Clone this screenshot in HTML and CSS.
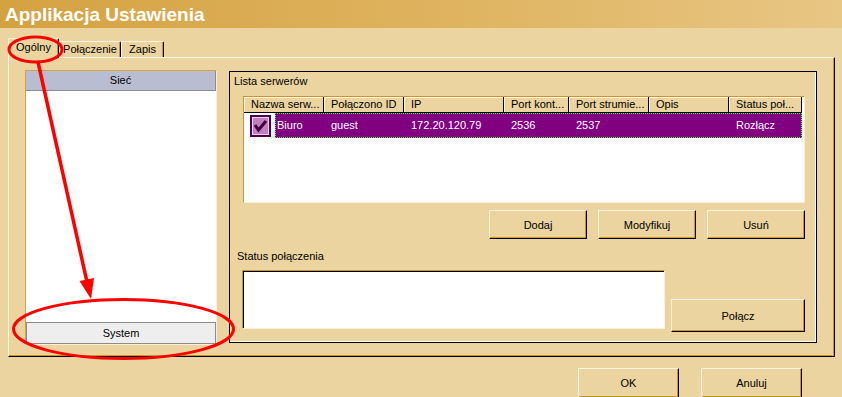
FILE: index.html
```html
<!DOCTYPE html>
<html>
<head>
    <title>Applikacja Ustawienia</title>
    <link rel="stylesheet" href="styles.css">
</head>
<body>
<div class="window">
    <!-- Title bar -->
    <div class="titlebar">Applikacja Ustawienia</div>

    <!-- Tabs -->
    <div class="tabs">
        <div class="tab active">Ogólny</div>
        <div class="tab">Połączenie</div>
        <div class="tab tab-short">Zapis</div>
    </div>

    <div class="panel">
        <!-- Left navigation bar -->
        <div class="navbar">
            <div class="nav-head">Sieć</div>
            <div class="nav-body"></div>
            <div class="nav-foot">System</div>
        </div>

        <!-- Server list group -->
        <div class="group">
            <div class="group-label">Lista serwerów</div>
            <div class="listview">
                <div class="lv-head">
                    <div class="col w80">Nazwa serw...</div>
                    <div class="col w80">Połączono ID</div>
                    <div class="col w100">IP</div>
                    <div class="col w65">Port kont...</div>
                    <div class="col w80">Port strumie...</div>
                    <div class="col w80">Opis</div>
                    <div class="col w73">Status poł...</div>
                </div>
                <div class="lv-row">
                    <div class="chk-cell">
                        <svg class="chk" width="21" height="22" viewBox="0 0 21 22">
                            <rect x="0" y="0" width="21" height="22" fill="#4a004a"/>
                            <rect x="2" y="2" width="17" height="18" fill="#ecd0ec"/>
                            <rect x="3" y="3" width="15" height="16" fill="#c080c0"/>
                            <polyline points="5,10 8.5,15 16,6" fill="none" stroke="#400040" stroke-width="3"/>
                        </svg>
                    </div>
                    <div class="sel">
                        <div class="cell first">Biuro</div>
                        <div class="cell w80">guest</div>
                        <div class="cell w100">172.20.120.79</div>
                        <div class="cell w65">2536</div>
                        <div class="cell w80">2537</div>
                        <div class="cell w80"></div>
                        <div class="cell last">Rozłącz</div>
                    </div>
                </div>
            </div>

            <div class="list-buttons">
                <button class="btn">Dodaj</button>
                <button class="btn">Modyfikuj</button>
                <button class="btn">Usuń</button>
            </div>

            <div class="group-label status-label">Status połączenia</div>
            <div class="status-row">
                <div class="status-box"></div>
                <button class="btn btn-connect">Połącz</button>
            </div>
        </div>
    </div>

    <!-- Dialog buttons -->
    <div class="dialog-buttons">
        <button class="btn btn-dialog">OK</button>
        <button class="btn btn-dialog">Anuluj</button>
    </div>

    <!-- Red annotations -->
    <svg class="marks" width="842" height="397" viewBox="0 0 842 397">
        <ellipse cx="35.5" cy="49.5" rx="26.5" ry="12.5" fill="none" stroke="#ff0000" stroke-width="3"/>
        <line x1="38" y1="62" x2="87" y2="282" stroke="#ff0000" stroke-width="3.5"/>
        <polygon points="91,299 79.5,281 94,278" fill="#ff0000"/>
        <ellipse cx="123.5" cy="329" rx="110" ry="29.5" fill="none" stroke="#ff0000" stroke-width="3"/>
    </svg>
</div>
</body>
</html>
```

FILE: styles.css
```css
/* General */
body {
    margin: 0;
    padding: 0;
    font-family: 'Liberation Sans', Arial, sans-serif;
    font-size: 11px;
    color: #000;
    background-color: #ebd49f;
}

.window {
    position: relative;
    width: 842px;
    height: 397px;
    overflow: hidden;
    background-color: #ebd49f;
}

/* Title bar */
.titlebar {
    height: 28px;
    box-sizing: border-box;
    padding: 2px 0 0 5px;
    line-height: 26px;
    font-size: 19px;
    font-weight: bold;
    color: #fff;
    background: linear-gradient(90deg, #d5a242 0%, #deb25d 50%, #e8c684 100%);
}

/* Tabs */
.tabs {
    display: flex;
    align-items: flex-end;
    height: 20px;
    margin-top: 10px;
    margin-bottom: -1px;
    padding-left: 8px;
}

.tab {
    width: 62px;
    height: 16px;
    box-sizing: border-box;
    margin-bottom: 1px;
    line-height: 15px;
    text-align: center;
    border-top: 1px solid #fdf5e0;
    border-left: 1px solid #fdf5e0;
    border-right: 1px solid #000;
    border-radius: 2px 2px 0 0;
    box-shadow: inset -1px 0 0 #c8952e;
    background-color: #ebd49f;
}

.tab-short {
    width: 43px;
}

.tab.active {
    position: relative;
    width: 51px;
    height: 20px;
    margin-bottom: 0;
    line-height: 17px;
}

/* Main tab panel */
.panel {
    display: flex;
    align-items: flex-start;
    gap: 12px;
    width: 827px;
    height: 300px;
    box-sizing: border-box;
    margin-left: 8px;
    padding: 12px 0 0 16px;
    border-top: 1px solid #fdf5e0;
    border-left: 1px solid #fdf5e0;
    border-right: 1px solid #000;
    border-bottom: 1px solid #000;
    box-shadow: inset -1px -1px 0 #c8952e;
}

/* Left navigation */
.navbar {
    display: flex;
    flex-direction: column;
    width: 192px;
    height: 275px;
    box-sizing: border-box;
    border-top: 1px solid #d3a345;
    border-left: 1px solid #d3a345;
    border-right: 1px solid #fbf0d6;
    border-bottom: 1px solid #fbf0d6;
}

.nav-head {
    height: 20px;
    box-sizing: border-box;
    line-height: 19px;
    text-align: center;
    background-color: #b8bdd2;
    border-right: 1px solid #8c8c8c;
    border-bottom: 1px solid #8c8c8c;
}

.nav-body {
    flex: 1;
    background-color: #fff;
}

.nav-foot {
    height: 22px;
    box-sizing: border-box;
    line-height: 20px;
    text-align: center;
    background-color: #eeeeee;
    border: 1px solid #8c8c8c;
}

/* Group box */
.group {
    width: 588px;
    height: 272px;
    box-sizing: border-box;
    margin-top: 1px;
    padding: 2px 11px 0 13px;
    border: 1px solid #000;
    box-shadow: inset -1px -1px 0 #fff;
}

.group-label {
    height: 15px;
    line-height: 15px;
    margin-left: -9px;
}

/* List view */
.listview {
    width: 562px;
    height: 107px;
    box-sizing: border-box;
    margin-top: 7px;
    background-color: #fff;
    border-top: 1px solid #c8952e;
    border-left: 1px solid #c8952e;
    border-right: 1px solid #fbf0d6;
    border-bottom: 1px solid #fbf0d6;
}

.lv-head {
    display: flex;
    height: 16px;
}

.col {
    height: 16px;
    box-sizing: border-box;
    padding-left: 7px;
    line-height: 15px;
    white-space: nowrap;
    overflow: hidden;
    background-color: #ebd49f;
    border-right: 1px solid #000;
    border-bottom: 1px solid #000;
    box-shadow: inset 1px 1px 0 #fdf5e0;
}

.w80 { width: 80px; }
.w100 { width: 100px; }
.w65 { width: 65px; }
.w73 { width: 73px; }

.lv-row {
    display: flex;
    height: 25px;
}

.chk-cell {
    width: 31px;
}

.chk {
    display: block;
    margin: 2px 0 0 6px;
}

.sel {
    display: flex;
    width: 527px;
    height: 25px;
    box-sizing: border-box;
    background-color: #800080;
    border: 1px dotted #40ff40;
    color: #fff;
}

.cell {
    box-sizing: border-box;
    padding-left: 7px;
    line-height: 23px;
    white-space: nowrap;
}

.cell.first {
    width: 48px;
    padding-left: 1px;
}

.cell.last {
    width: 72px;
}

/* Buttons */
.btn {
    display: block;
    box-sizing: border-box;
    height: 29px;
    padding: 0;
    font-family: 'Liberation Sans', Arial, sans-serif;
    font-size: 11px;
    font-weight: normal;
    color: #000;
    text-align: center;
    background-color: #ebd49f;
    border-top: 1px solid #fdf5e0;
    border-left: 1px solid #fdf5e0;
    border-right: 1px solid #000;
    border-bottom: 1px solid #000;
    border-radius: 0;
    box-shadow: inset -1px -1px 0 #c8952e;
}

.list-buttons {
    display: flex;
    justify-content: flex-end;
    gap: 11px;
    margin-top: 7px;
}

.list-buttons .btn {
    width: 98px;
}

.status-label {
    margin-top: 10px;
    margin-left: -6px;
}

.status-row {
    display: flex;
    align-items: flex-start;
    margin-top: 6px;
}

.status-box {
    width: 423px;
    height: 59px;
    box-sizing: border-box;
    margin-left: -1px;
    background-color: #fff;
    border-top: 1px solid #c8952e;
    border-left: 1px solid #c8952e;
    border-right: 1px solid #fbf0d6;
    border-bottom: 1px solid #fbf0d6;
    box-shadow: inset 1px 1px 0 #000;
}

.btn-connect {
    width: 134px;
    height: 33px;
    margin: 29px 0 0 6px;
}

/* Dialog buttons */
.dialog-buttons {
    display: flex;
    justify-content: flex-end;
    gap: 22px;
    margin-top: 11px;
    padding-right: 40px;
}

.btn-dialog {
    width: 101px;
    height: 30px;
}

/* Annotation overlay */
.marks {
    position: absolute;
    top: 0;
    left: 0;
    pointer-events: none;
}
```
